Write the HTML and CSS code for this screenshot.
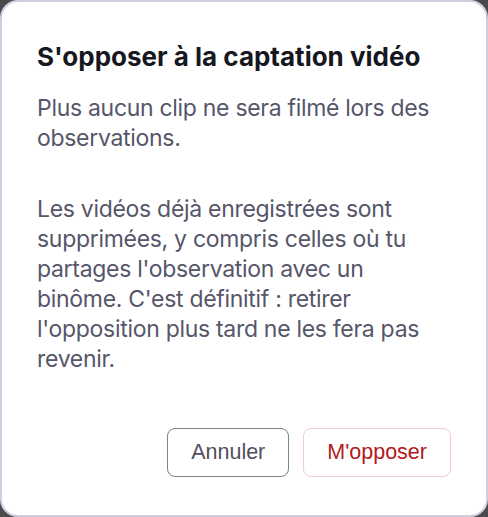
FILE: index.html
```html
<!DOCTYPE html>
<html lang="fr">
<head>
  <meta charset="UTF-8" />
  <meta name="viewport" content="width=device-width, initial-scale=1.0" />
  <title>S'opposer à la captation vidéo</title>
  <link rel="stylesheet" href="styles.css">
</head>
<body>
  <div class="dialog">
    <h2 class="dialog-title">S'opposer à la captation vidéo</h2>
    <p class="dialog-text">Plus aucun clip ne sera filmé lors des observations.</p>
    <p class="dialog-text">Les vidéos déjà enregistrées sont supprimées, y compris celles où tu partages l'observation avec un binôme. C'est définitif : retirer l'opposition plus tard ne les fera pas revenir.</p>
    <div class="dialog-actions">
      <button class="btn btn-cancel">Annuler</button>
      <button class="btn btn-danger">M'opposer</button>
    </div>
  </div>
</body>
</html>
```

FILE: styles.css
```css
html, body {
  margin: 0;
  height: 100%;
}
body {
  background-color: #4a4a4c;
  overflow: hidden;
}
.dialog {
  box-sizing: border-box;
  height: 100%;
  background: #ffffff;
  border: 2px solid #cfcde0;
  border-radius: 18px;
  padding: 39px 35px 0 35px;
  font-family: Inter, "Noto Sans", sans-serif;
}
.dialog-title {
  margin: 0 0 20px 0;
  font-size: 26px;
  line-height: 32px;
  font-weight: 700;
  color: #17171f;
}
.dialog-text {
  margin: 0 0 41px 0;
  font-size: 23px;
  line-height: 30px;
  color: #56566a;
  letter-spacing: -0.3px;
}
.dialog-actions {
  display: flex;
  justify-content: flex-end;
  gap: 14px;
  margin-top: 54px;
}
.btn {
  font-family: "Liberation Sans", Arial, sans-serif;
  font-size: 21.5px;
  line-height: 23px;
  padding: 12px 23px;
  height: 49px;
  background: #ffffff;
  border-radius: 8px;
  cursor: pointer;
}
.btn-cancel {
  color: #4f4f5f;
  border: 1px solid #80808e;
}
.btn-danger {
  color: #b3191c;
  border: 1px solid #f3cccc;
}
```
